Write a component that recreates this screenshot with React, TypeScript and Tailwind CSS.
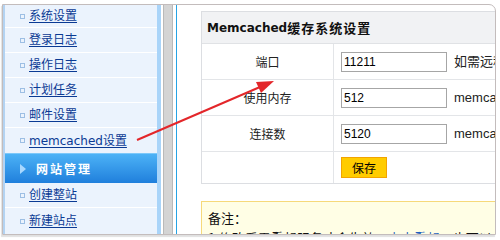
import React from "react";

const sideFont = { fontFamily: '"DejaVu Sans", "Noto Sans CJK SC", sans-serif' };

function SideLink({ label, h, border = true }: { label: string; h: string; border?: boolean }) {
  return (
    <div className={`${h} flex items-center pl-[15px] ${border ? "border-b border-white" : ""}`}>
      <span className="w-[5px] h-[5px] border border-[#9dbfe4] mr-[4px] shrink-0" />
      <a className="text-[12px] text-[#0a3a94] underline underline-offset-[2px] leading-none">{label}</a>
    </div>
  );
}

export default function App() {
  return (
    <div className="relative w-[500px] h-[240px] bg-white overflow-hidden pt-[4px] pl-[2px]" style={sideFont}>
      <div className="w-[494px] h-[231px] border border-[#c3bcbc] rounded-tr-[7px] overflow-hidden flex shadow-[-1px_2px_1px_rgba(0,0,0,0.12)]">
        {/* sidebar */}
        <div className="w-[154px] shrink-0 border-l-2 border-[#b3d3f2] bg-[#ebf3fd] flex flex-col">
          <SideLink label="系统设置" h="h-[23px]" />
          <SideLink label="登录日志" h="h-[25px]" />
          <SideLink label="操作日志" h="h-[25px]" />
          <SideLink label="计划任务" h="h-[25px]" />
          <SideLink label="邮件设置" h="h-[25px]" />
          <SideLink label="memcached设置" h="h-[25px]" border={false} />
          <div className="h-[30px] shrink-0 flex items-center pl-[15px] bg-gradient-to-b from-[#4cb2f6] to-[#1f7fdc] border-t border-[#7cc8fa]">
            <svg width="6" height="10" viewBox="0 0 6 10" className="mr-[10px]">
              <polygon points="0,0 6,5 0,10" fill="#a9d8ff" />
            </svg>
            <span className="text-white font-bold text-[12px] tracking-[2px]" style={{ fontFamily: '"Noto Sans CJK SC", sans-serif' }}>
              网站管理
            </span>
          </div>
          <SideLink label="创建整站" h="h-[25px]" />
          <div className="flex-1 flex items-center pl-[15px]">
            <span className="w-[5px] h-[5px] border border-[#9dbfe4] mr-[4px] shrink-0" />
            <a className="text-[12px] text-[#0a3a94] underline underline-offset-[2px] leading-none">新建站点</a>
          </div>
        </div>
        <div className="w-[4px] shrink-0 bg-[#a9d4f9]" />
        <div className="w-[2px] shrink-0 bg-white" />
        <div className="w-[10px] shrink-0 bg-[#d4d4d4] border-x border-[#b9b9b9]" />
        <div className="w-[3px] shrink-0 bg-white" />
        <div className="w-px shrink-0 bg-[#26a3e4]" />
        {/* content */}
        <div className="flex-1 min-w-0 pl-[24px] pt-[6px] overflow-hidden" style={{ fontFamily: '"Noto Sans CJK SC", sans-serif' }}>
          <div className="w-[340px] border border-[#dcdee2] text-[#222]">
            <div className="h-[32px] bg-[#f1f2f4] border-b border-[#e0e2e5] flex items-center pl-[5px] font-bold text-[#111]">
              <span className="text-[12px]" style={{ fontFamily: '"DejaVu Sans", sans-serif' }}>Memcached</span>
              <span className="text-[13px] tracking-[1px]">缓存系统设置</span>
            </div>
            {[
              ["端口", "11211", "如需远程访问"],
              ["使用内存", "512", "memcached"],
              ["连接数", "5120", "memcached"],
            ].map(([l, v, t]) => (
              <div key={l} className="h-[36px] border-b border-[#e3e5e8] flex">
                <div className="w-[132px] shrink-0 border-r border-[#e3e5e8] flex items-center justify-center text-[12px]">{l}</div>
                <div className="flex items-center pl-[7px] gap-[7px] whitespace-nowrap">
                  <div className="w-[106px] h-[20px] border border-[#a6a6a6] flex items-center pl-[2px] text-[12px] text-black" style={{ fontFamily: '"Liberation Sans", sans-serif' }}>
                    {v}
                  </div>
                  <span className="text-[13px] text-[#222]" style={{ fontFamily: '"Liberation Sans", "Noto Sans CJK SC", sans-serif' }}>{t}</span>
                </div>
              </div>
            ))}
            <div className="h-[31px] flex">
              <div className="w-[132px] shrink-0 border-r border-[#e3e5e8]" />
              <div className="flex items-center pl-[7px]">
                <button className="w-[46px] h-[21px] bg-[#ffcc00] border border-[#f2a400] text-[12px] text-black flex items-center justify-center">
                  保存
                </button>
              </div>
            </div>
          </div>
          <div className="mt-[17px] w-[340px] border border-[#f6d97a] bg-[#fffee5] pl-[6px] pt-[6px] text-[13px] leading-[20px] text-[#111] whitespace-nowrap">
            <div>备注：</div>
            <div>
              1.修改后需重起服务才会生效，<a className="text-[#1d5fbf] underline">点击重起</a>，也可以在服务管理中重起
            </div>
          </div>
        </div>
      </div>
      <svg className="absolute inset-0 pointer-events-none" width="500" height="240" viewBox="0 0 500 240">
        <line x1="137" y1="140" x2="260" y2="87" stroke="#e3262a" strokeWidth="2" />
        <polygon points="274,81 256,82 261,93" fill="#e3262a" />
      </svg>
    </div>
  );
}
